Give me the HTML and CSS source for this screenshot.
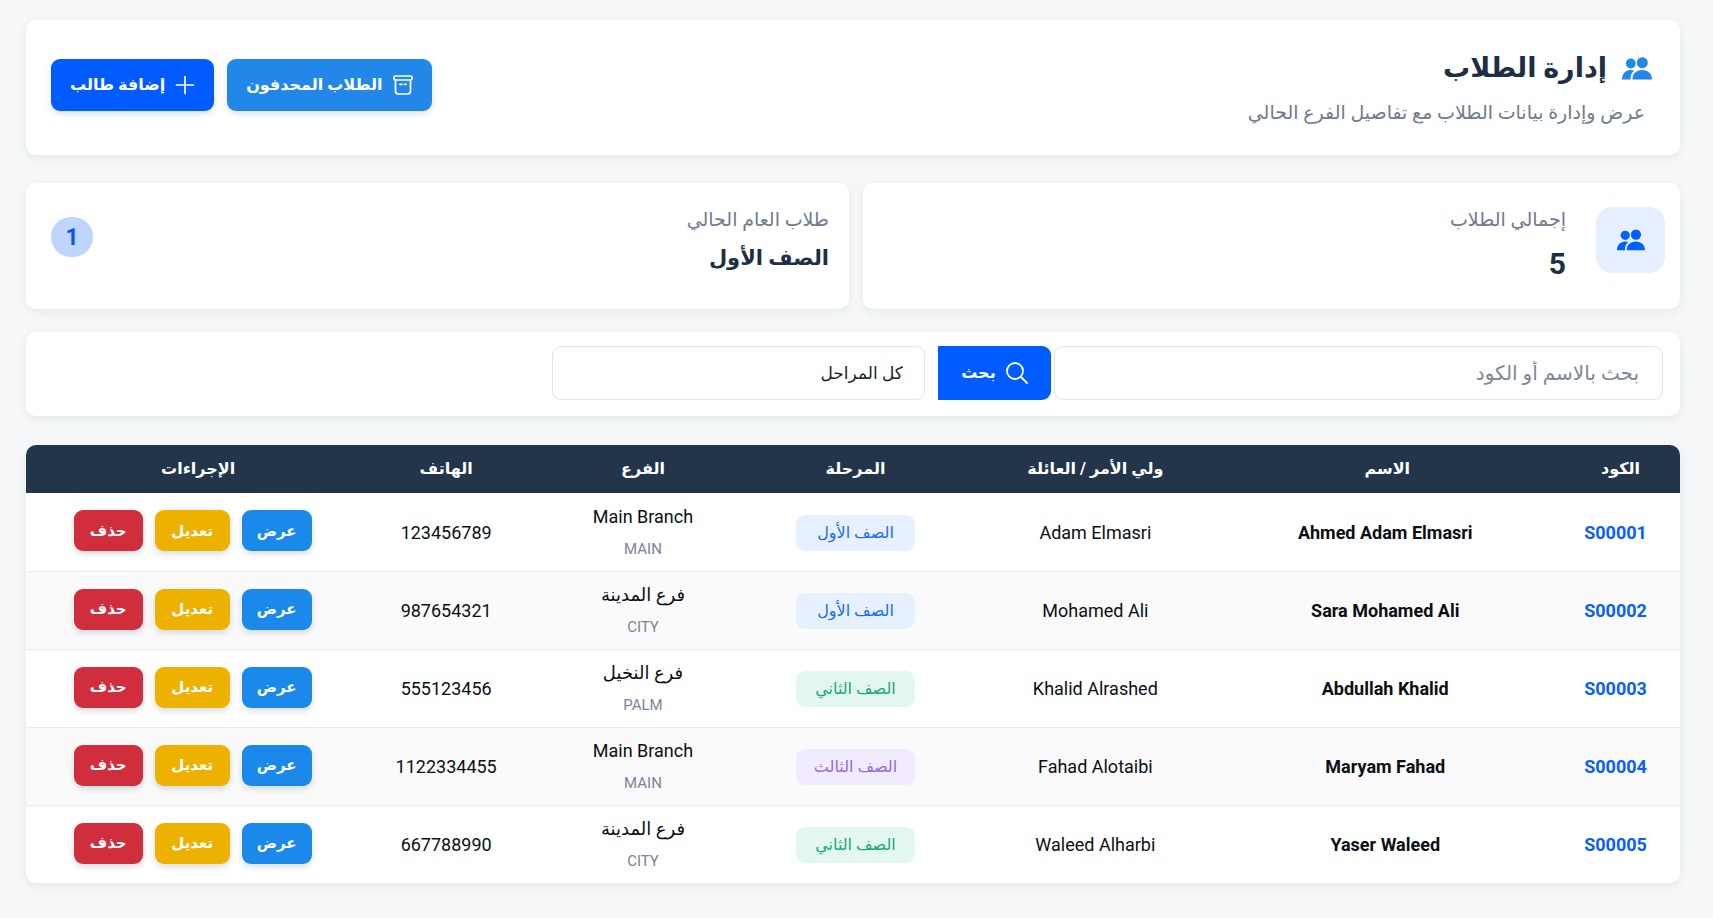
FILE: index.html
```html
<!DOCTYPE html>
<html lang="ar" dir="rtl">
<head>
<meta charset="utf-8">
<title>إدارة الطلاب</title>
<link rel="stylesheet" href="styles.css">
</head>
<body>
<svg class="sprite" aria-hidden="true">
  <symbol id="people" viewBox="0 0 30 23">
    <circle cx="20.300" cy="5.700" r="5.500"/>
    <circle cx="8.800" cy="6.500" r="4.900"/>
    <path d="M10.500 22.500c-.5-5.500 4-9.500 9.700-9.500 5.800 0 9.800 4 9.800 9.500z"/>
    <path d="M0 22.500C0 17 3.500 13 8.800 13c1.200 0 2.400.2 3.400.6-2.600 2-4 5-3.600 8.900z"/>
  </symbol>
</svg>
<main class="page">
  <header class="card header">
    <div class="heading">
      <h1 class="title"><svg class="title-icon"><use href="#people"/></svg>إدارة الطلاب</h1>
      <p class="subtitle">عرض وإدارة بيانات الطلاب مع تفاصيل الفرع الحالي</p>
    </div>
    <div class="header-actions">
      <button type="button" class="btn btn-sky">
        <svg class="btn-icon" viewBox="0 0 20 20"><rect x="1" y="1" width="18" height="4" rx="1.500"/><path d="M2.500 5v11a3 3 0 0 0 3 3h9a3 3 0 0 0 3-3V5M7 9.300h2M11.500 9.300h1.500"/></svg>
        الطلاب المحدفون
      </button>
      <button type="button" class="btn btn-blue">
        <svg class="btn-icon" viewBox="0 0 20 20"><path d="M10 1.500v17M1.500 10h17"/></svg>
        إضافة طالب
      </button>
    </div>
  </header>

  <section class="stats">
    <div class="card stat">
      <div class="stat-icon"><svg class="people"><use href="#people"/></svg></div>
      <div class="stat-body">
        <p class="stat-label">إجمالي الطلاب</p>
        <p class="stat-number">5</p>
      </div>
    </div>
    <div class="card stat stat-year">
      <div class="stat-body">
        <p class="stat-label">طلاب العام الحالي</p>
        <p class="stat-value">الصف الأول</p>
      </div>
      <span class="count">1</span>
    </div>
  </section>

  <form class="card filters">
    <input class="field search" type="text" aria-label="بحث بالاسم أو الكود" placeholder="بحث بالاسم أو الكود">
    <button type="button" class="btn-search">
      <svg class="search-icon" viewBox="0 0 22 22"><circle cx="9" cy="9" r="8"/><path d="M15 15l6 6"/></svg>
      بحث
    </button>
    <select class="field stage-select" aria-label="المرحلة"><option>كل المراحل</option></select>
  </form>

  <div class="table-card">
    <table class="students">
      <colgroup><col class="c-code"><col class="c-name"><col class="c-parent"><col class="c-stage"><col class="c-branch"><col class="c-phone"><col class="c-actions"></colgroup>
      <thead>
        <tr><th class="code-head">الكود</th><th>الاسم</th><th>ولي الأمر / العائلة</th><th>المرحلة</th><th>الفرع</th><th>الهاتف</th><th class="actions-head">الإجراءات</th></tr>
      </thead>
      <tbody>
        <tr>
          <td><a class="code" href="#">S00001</a></td><td class="name">Ahmed Adam Elmasri</td><td>Adam Elmasri</td>
          <td><span class="stage stage-1">الصف الأول</span></td>
          <td><span class="branch">Main Branch</span><span class="branch-code">MAIN</span></td><td>123456789</td>
          <td class="actions-cell"><div class="actions"><button type="button" class="act view">عرض</button><button type="button" class="act edit">تعديل</button><button type="button" class="act delete">حذف</button></div></td>
        </tr>
        <tr>
          <td><a class="code" href="#">S00002</a></td><td class="name">Sara Mohamed Ali</td><td>Mohamed Ali</td>
          <td><span class="stage stage-1">الصف الأول</span></td>
          <td><span class="branch">فرع المدينة</span><span class="branch-code">CITY</span></td><td>987654321</td>
          <td class="actions-cell"><div class="actions"><button type="button" class="act view">عرض</button><button type="button" class="act edit">تعديل</button><button type="button" class="act delete">حذف</button></div></td>
        </tr>
        <tr>
          <td><a class="code" href="#">S00003</a></td><td class="name">Abdullah Khalid</td><td>Khalid Alrashed</td>
          <td><span class="stage stage-2">الصف الثاني</span></td>
          <td><span class="branch">فرع النخيل</span><span class="branch-code">PALM</span></td><td>555123456</td>
          <td class="actions-cell"><div class="actions"><button type="button" class="act view">عرض</button><button type="button" class="act edit">تعديل</button><button type="button" class="act delete">حذف</button></div></td>
        </tr>
        <tr>
          <td><a class="code" href="#">S00004</a></td><td class="name">Maryam Fahad</td><td>Fahad Alotaibi</td>
          <td><span class="stage stage-3">الصف الثالث</span></td>
          <td><span class="branch">Main Branch</span><span class="branch-code">MAIN</span></td><td>1122334455</td>
          <td class="actions-cell"><div class="actions"><button type="button" class="act view">عرض</button><button type="button" class="act edit">تعديل</button><button type="button" class="act delete">حذف</button></div></td>
        </tr>
        <tr>
          <td><a class="code" href="#">S00005</a></td><td class="name">Yaser Waleed</td><td>Waleed Alharbi</td>
          <td><span class="stage stage-2">الصف الثاني</span></td>
          <td><span class="branch">فرع المدينة</span><span class="branch-code">CITY</span></td><td>667788990</td>
          <td class="actions-cell"><div class="actions"><button type="button" class="act view">عرض</button><button type="button" class="act edit">تعديل</button><button type="button" class="act delete">حذف</button></div></td>
        </tr>
      </tbody>
    </table>
  </div>
</main>
</body>
</html>
```

FILE: styles.css
```css
* { box-sizing: border-box; }

body {
  margin: 0;
  background: #f5f7f8;
  color: #0b0f14;
  font-family: Roboto, "DejaVu Sans", sans-serif;
  font-size: 18px;
  line-height: 24px;
}

h1, p { margin: 0; }
button, input, select { font: inherit; }
button { border: 0; color: #fff; cursor: pointer; }
.sprite { display: none; }

.page {
  display: flex;
  flex-direction: column;
  padding: 20px 33px 32px 26px;
}

.card, .table-card {
  background: #fff;
  border-radius: 10px;
  box-shadow: 0 3px 10px rgba(30, 45, 60, 0.07);
}

.header {
  display: flex;
  justify-content: space-between;
  align-items: flex-start;
  padding: 28px 28px 28px 25px;
  min-height: 135px;
}

.title {
  display: flex;
  align-items: center;
  gap: 15px;
  font-size: 27px;
  line-height: 40px;
  color: #1d2f45;
}
.title-icon { width: 30px; height: 23px; fill: #2187e8; }
.subtitle {
  padding-right: 7px;
  margin-top: 13px;
  font-size: 19px;
  line-height: 24px;
  color: #6f7a8c;
}

.header-actions { display: flex; gap: 13px; margin-top: 11px; }
.btn {
  display: flex;
  align-items: center;
  justify-content: center;
  gap: 10px;
  height: 52px;
  padding: 0 19px;
  border-radius: 9px;
  font-size: 16px;
  font-weight: 700;
  box-shadow: 0 3px 6px rgba(30, 45, 60, 0.14);
}
.btn-sky { background: #2287e8; }
.btn-blue { background: #005cff; }
.btn-icon { width: 20px; height: 20px; fill: none; stroke: #fff; stroke-width: 1.7; stroke-linecap: round; }

.stats {
  display: grid;
  grid-template-columns: 817fr 823fr;
  gap: 14px;
  margin-top: 28px;
}
.stat {
  display: flex;
  align-items: flex-start;
  min-height: 126px;
  padding: 24px 15px 24px 25px;
}
.stat-icon {
  display: flex;
  align-items: center;
  justify-content: center;
  width: 69px;
  height: 66px;
  margin-left: 30px;
  border-radius: 16px;
  background: #e5efff;
}
.people { width: 28px; height: 22px; fill: #0560fb; }
.stat-label { font-size: 19px; line-height: 26px; color: #6f7a8c; }
.stat-number { margin-top: 14px; font-size: 30px; line-height: 34px; font-weight: 700; color: #1d2f45; }
.stat-value { margin-top: 8px; font-size: 21px; line-height: 34px; font-weight: 700; color: #1d2f45; }
.stat-year { justify-content: space-between; padding-right: 20px; }
.count {
  width: 42px;
  height: 40px;
  margin-top: 10px;
  border-radius: 20px;
  background: #bdd5ff;
  color: #0857e6;
  font-size: 23px;
  font-weight: 700;
  line-height: 42px;
  text-align: center;
}

.filters {
  display: flex;
  min-height: 84px;
  margin-top: 23px;
  padding: 14px 17px 16px;
}
.field {
  height: 54px;
  border: 1px solid #dfe3ea;
  border-radius: 9px;
  background: #fff;
  padding: 0 23px;
  font-size: 20px;
}
.search { flex: 0 0 37.6%; }
.search::placeholder { color: #7d8797; opacity: 1; }
.btn-search {
  display: flex;
  align-items: center;
  justify-content: center;
  gap: 10px;
  width: 113px;
  height: 54px;
  margin: 0 3px 0 13px;
  border-radius: 0 9px 9px 0;
  background: #005cff;
  font-weight: 700;
  font-size: 16px;
}
.search-icon { width: 22px; height: 22px; fill: none; stroke: #fff; stroke-width: 1.8; stroke-linecap: round; }
.stage-select { flex: 0 0 23%; appearance: none; padding: 0 21px; color: #1a222c; font-size: 17px; }

.table-card { margin-top: 29px; overflow: hidden; }
.students { width: 100%; table-layout: fixed; border-collapse: collapse; text-align: center; }
.c-code { width: 7.8%; }
.c-name { width: 19.8%; }
.c-parent { width: 15.5%; }
.c-stage { width: 13.5%; }
.c-branch { width: 12.2%; }
.c-phone { width: 11.6%; }
.c-actions { width: 19.6%; }
.students th { height: 48px; padding: 0; background: #22354a; color: #fff; font-size: 16px; font-weight: 700; }
.students td { height: 78px; padding: 2px 0 0; }
.students tbody tr { border-bottom: 1px solid #eaecef; }
.students tbody tr:nth-child(even) { background: #fafafb; }
.students tbody tr:last-child { border-bottom: 0; }

.code { color: #0a5ffa; font-weight: 700; text-decoration: none; }
.students .name { padding-right: 4px; font-weight: 700; }
.stage {
  display: inline-block;
  min-width: 119px;
  padding: 6px 16px;
  border-radius: 9px;
  font-size: 16px;
}
.stage-1 { background: #e6f0ff; color: #1a6cf5; }
.stage-2 { background: #e3f6ef; color: #17a67c; }
.stage-3 { background: #f1ecfd; color: #9468ea; }
.branch, .branch-code { display: block; }
.branch-code { margin-top: 8px; font-size: 15px; color: #7a8494; }

.students .code-head { padding-left: 10px; }
.students .actions-head { padding-left: 20px; }
.students .actions-cell { padding: 0 0 2px 9px; }
.actions { display: flex; justify-content: center; gap: 12px; }
.act {
  height: 41px;
  min-width: 69px;
  padding: 0 15px;
  border-radius: 9px;
  font-size: 15px;
  font-weight: 700;
  box-shadow: 0 3px 6px rgba(30, 45, 60, 0.16);
}
.view { background: #1a89e9; }
.edit { min-width: 75px; background: #edb200; }
.delete { background: #d02d3d; }
```
